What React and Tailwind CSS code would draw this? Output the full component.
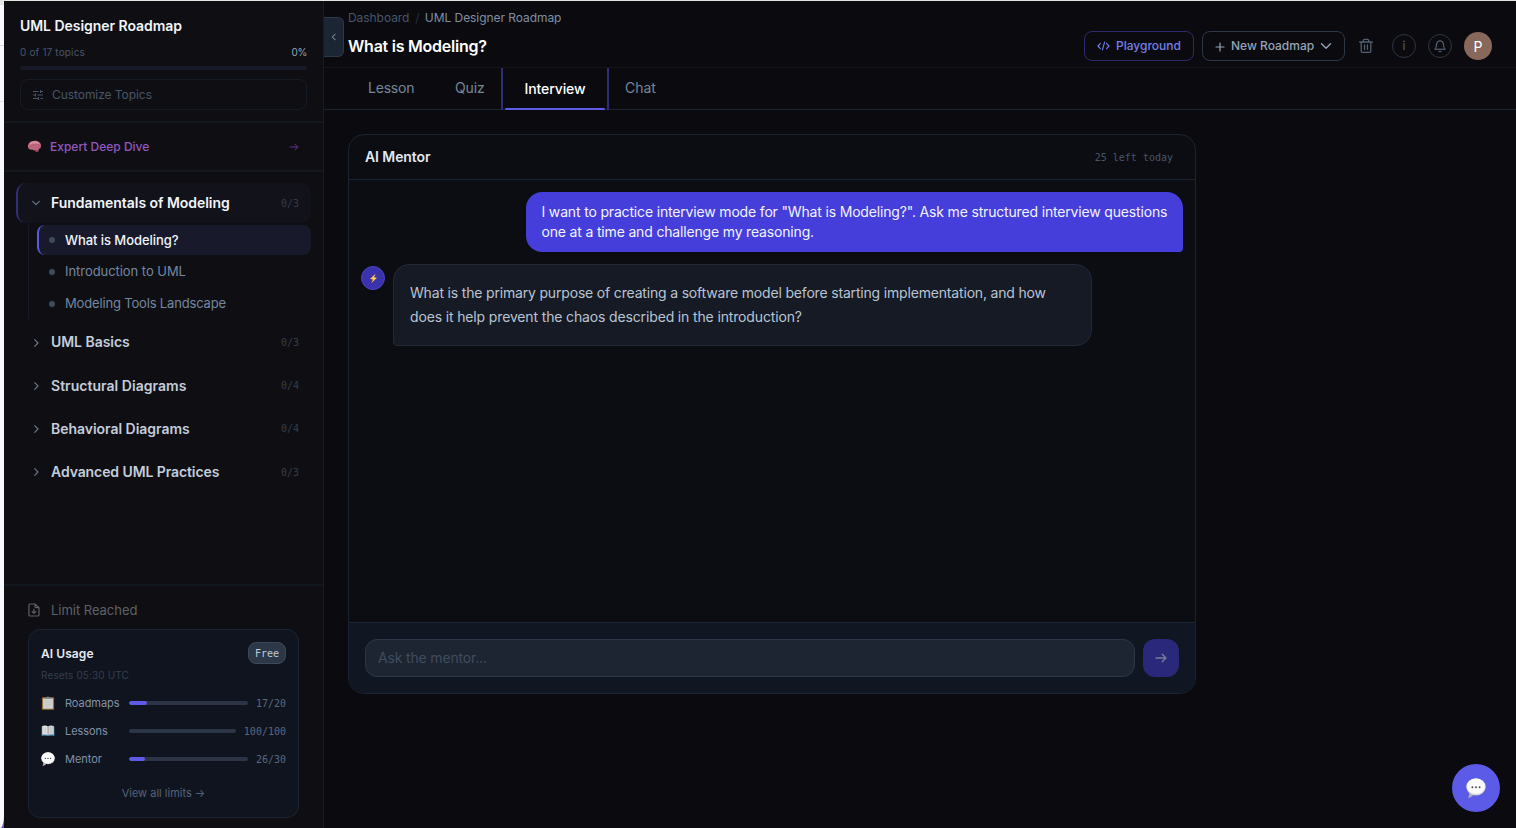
const MONO = "font-['DejaVu_Sans_Mono',monospace]";

const groups = [
  { title: "UML Basics", count: "0/3", tracking: "tracking-[-0.05px]" },
  { title: "Structural Diagrams", count: "0/4", tracking: "tracking-[0.03px]" },
  { title: "Behavioral Diagrams", count: "0/4", tracking: "tracking-[-0.03px]" },
  { title: "Advanced UML Practices", count: "0/3", tracking: "tracking-[-0.09px]" },
];

function Chevron({ className, d }) {
  return (
    <svg viewBox="0 0 12 12" className={className} fill="none" stroke="currentColor" strokeWidth="1.2" strokeLinecap="round" strokeLinejoin="round">
      <path d={d} />
    </svg>
  );
}

function Brain() {
  return (
    <svg viewBox="0 0 16 14" className="h-[13px] w-[15px]">
      <path d="M1 7.6C.6 4.6 2.6 2 5 1.3 7.400.4 11 .6 12.8 2.2c1.800.9 2.600 3 2.100 4.900-.1 1.600-1 2.300-2.100 2.500-.2 1.900-1.300 3.200-2.500 3.200-.8 0-1.300-.7-1.400-1.700-1.300.3-2.400 0-3.100-.8C3.600 10.700 1.300 9.900 1 7.600Z" fill="#c2687f" />
      <path d="M2.200 5C4 2.100 7 1.100 9.800 1.600c1.800.2 3.100 1.300 3.600 2.800-3-.8-7.500-.8-11.200.6Z" fill="#dc94a4" />
      <path d="M3 7.800c1.200-1.300 2.700-.3 3.600-1.200M6 4c1 .8.600 1.600 1.800 1.800M9.600 3.400c-.5 1 .8 1.300.2 2.300M9 8.800c1.200-.1 2-1 3.500-.5M12 4.800c-.5.8.5 1.300 1.600 1.200" stroke="#a04e69" strokeWidth=".6" fill="none" strokeLinecap="round" />
      <path d="M8.900 11.100c1.400 0 2.700-.4 3.900-1.500-.2 1.900-1.300 3.200-2.500 3.200-.8 0-1.300-.7-1.400-1.700Z" fill="#8a4058" />
    </svg>
  );
}

function Clipboard() {
  return (
    <svg viewBox="0 0 14 14" className="h-[14px] w-[14px]">
      <rect x=".9" y="1.200" width="12.200" height="12.600" rx=".9" fill="#9a6c3c" />
      <rect x="2.100" y="2.500" width="9.800" height="10.200" fill="#d2d2d2" />
      <path d="M3.500 5h7M3.500 6.800h7M3.500 8.600h7M3.500 10.400h5" stroke="#bcbcbc" strokeWidth=".6" />
      <path d="M4.300 1.200h1.500a1.250 1.100 0 0 1 2.400 0h1.500v1.700H4.300Z" fill="#7f868c" />
    </svg>
  );
}

function OpenBook() {
  return (
    <svg viewBox="0 0 14 12" className="h-[12px] w-[14px]">
      <path d="M.5 1.600h13v9.400H.5Z" fill="#2f6d8e" />
      <path d="M1.200 1.100C3.200.3 5.600.4 7 1.500V10.300C5.400 9.400 3.200 9.400 1.200 10Z" fill="#e3e3e3" />
      <path d="M12.800 1.100C10.800.3 8.400.4 7 1.500V10.300c1.600-.9 3.800-.9 5.800-.3Z" fill="#d2d2d2" />
      <path d="M7 1.500V10.700" stroke="#77797c" strokeWidth=".7" />
      <path d="M3 2.200v6M4.600 2.200v6M9.400 2.200v6M11 2.200v6" stroke="#b4b4b4" strokeWidth=".5" />
    </svg>
  );
}

function SpeechBubble({ className }) {
  return (
    <svg viewBox="0 0 20 20" className={className}>
      <path d="M3.200 14.300c.3 2-.2 3.900-1.300 5.500 2.500-.2 4.700-1.500 5.900-3.500Z" fill="#b0b0b3" />
      <ellipse cx="10" cy="8.900" rx="9.700" ry="8.600" fill="#d4d4d7" />
      <ellipse cx="10" cy="8.300" rx="9.200" ry="7.800" fill="#fbfbfb" />
      <g fill="#4b4b4f">
        <circle cx="6.400" cy="9.200" r=".95" />
        <circle cx="10" cy="9.200" r=".95" />
        <circle cx="13.600" cy="9.200" r=".95" />
      </g>
    </svg>
  );
}

function SidebarHeader() {
  return (
    <div className="h-[122px] shrink-0 border-b-2 border-[#14181f] px-4 pt-[15px]">
      <h2 className="text-[14px] leading-5 font-semibold tracking-[-0.045px] text-[#f1f5f9]">UML Designer Roadmap</h2>
      <div className="mt-2 flex items-center justify-between text-[10px] leading-4">
        <span className="tracking-[0.15px] text-[#475569]">0 of 17 topics</span>
        <span className="tracking-[-0.3px] text-[#94a3b8]">0%</span>
      </div>
      <div className="mt-[6px] h-1 rounded-full bg-[#171927]" />
      <button className="mt-[9px] flex h-[31px] w-full items-center gap-2 rounded-lg border border-[#161c26] px-[11px] text-[12px] text-[#475569]">
        <svg viewBox="0 0 24 24" className="h-3 w-3" fill="none" stroke="currentColor" strokeWidth="2">
          <path d="M2 5h11M17 5h5M17 2v6M2 12h5M11 12h11M7 9v6M2 19h11M17 19h5M13 16v6" />
        </svg>
        <span className="pt-px tracking-[-0.06px]">Customize Topics</span>
      </button>
    </div>
  );
}

function Lesson({ title, active, tracking }) {
  return (
    <div
      className={
        active
          ? "flex h-[30px] items-center rounded-lg border-l-2 border-[#5b5be6] bg-[#181a2c] pl-[10px] text-[13px] font-medium text-[#f1f5f9]"
          : "flex h-[30px] items-center border-l-2 border-transparent pl-[10px] text-[13px] text-[#7486a0]"
      }
    >
      <span className="mr-[10px] h-[6px] w-[6px] rounded-full bg-[#404b5b]" />
      <span className={active ? `pt-px ${tracking}` : tracking}>{title}</span>
    </div>
  );
}

function Count({ children }) {
  return <span className={`${MONO} ml-auto text-[10px] text-[#343d4b]`}>{children}</span>;
}

function UsageRow({ icon, label, value, percent }) {
  return (
    <div className="flex h-7 items-center">
      <span className="flex w-6 items-center">{icon}</span>
      <span className="w-16 text-[11px] tracking-[-0.05px] text-[#8291a7]">{label}</span>
      <span className="h-1 flex-1 overflow-hidden rounded-full bg-[#2b3545]">
        <span className="block h-full rounded-full bg-[#5d5be8]" style={{ width: `${percent}%` }} />
      </span>
      <span className={`${MONO} ml-2 text-[10px] text-[#5a687c]`}>{value}</span>
    </div>
  );
}

function Sidebar() {
  return (
    <aside className="flex w-80 shrink-0 flex-col border-r border-[#1a1b20] bg-[#0f0f13]">
      <SidebarHeader />
      <div className="flex h-[49px] shrink-0 items-center border-b-2 border-[#14181f] pr-6 pl-[23px]">
        <Brain />
        <span className="ml-2 text-[12px] font-medium text-[#9259c0]">Expert Deep Dive</span>
        <svg viewBox="0 0 10 10" className="ml-auto h-[10px] w-[10px]" fill="none" stroke="#68309b" strokeWidth="1" strokeLinecap="round" strokeLinejoin="round">
          <path d="M1.200 5h7.600M6 2.200 8.800 5 6 7.800" />
        </svg>
      </div>
      <nav className="flex flex-1 flex-col px-3 pt-[11px]">
        <div className="flex h-10 items-center rounded-[10px] border-l-2 border-[#312f76] bg-[#12121a] pr-3 pl-3">
          <Chevron className="h-3 w-3 text-[#64748b]" d="M2.700 4.400 6 7.700l3.300-3.300" />
          <span className="mb-[2px] ml-[9px] text-[14px] font-semibold tracking-[-0.04px] text-[#f1f5f9]">Fundamentals of Modeling</span>
          <Count>0/3</Count>
        </div>
        <div className="mt-[2px] ml-3 flex flex-col gap-[2px] border-l border-[#171a26] pl-2">
          <Lesson title="What is Modeling?" tracking="tracking-[-0.065px]" active />
          <Lesson title="Introduction to UML" tracking="tracking-[-0.05px]" />
          <Lesson title="Modeling Tools Landscape" tracking="tracking-[-0.165px]" />
        </div>
        <div className="mt-[2px] flex flex-col">
          {groups.map((g) => (
            <div key={g.title} className="flex h-[43.200px] items-center pr-3 pl-[14px]">
              <Chevron className="h-3 w-3 text-[#64748b]" d="M4.700 2.700 8 6 4.700 9.300" />
              <span className={`mb-[1.500px] ml-[9px] text-[14px] font-semibold text-[#c3cddb] ${g.tracking}`}>{g.title}</span>
              <Count>{g.count}</Count>
            </div>
          ))}
        </div>
      </nav>
      <div className="h-[244px] shrink-0 border-t-2 border-[#121820] pt-[6px]">
        <div className="flex h-[37px] items-center pl-6 text-[13px] tracking-[-0.03px] text-[#5e6065]">
          <svg viewBox="0 0 12 14" className="mr-[11px] mb-px h-[14px] w-3" fill="none" stroke="currentColor" strokeWidth="1.200" strokeLinecap="round" strokeLinejoin="round">
            <path d="M2.200 1h4.600L11 4.800v6.900A1.300 1.300 0 0 1 9.700 13H2.200A1.300 1.300 0 0 1 .9 11.700V2.300A1.300 1.300 0 0 1 2.200 1ZM7 1v2.600a1 1 0 0 0 1 1h3M5.950 6.200v4M4.200 8.600l1.750 1.700 1.750-1.700" />
          </svg>
          <span className="pt-px">Limit Reached</span>
        </div>
        <div className="mx-6 h-[189px] rounded-xl border border-[#1a2433] bg-[#10141f] px-3 pt-3">
          <div className="flex h-[22px] items-center justify-between">
            <span className="pt-px text-[12px] font-semibold tracking-[0.07px] text-[#e6ebf2]">AI Usage</span>
            <span className={`${MONO} flex h-[22px] items-center rounded-lg border border-[#3d4859] bg-[#2c3748] px-[6px] text-[10px] text-[#c1cbd9]`}>Free</span>
          </div>
          <div className="mt-[3px] mb-[6px] text-[10px] leading-4 tracking-[0.13px] text-[#343f4e]">Resets 05:30 UTC</div>
          <UsageRow icon={<Clipboard />} label="Roadmaps" value="17/20" percent={15} />
          <UsageRow icon={<OpenBook />} label="Lessons" value="100/100" percent={0} />
          <UsageRow icon={<SpeechBubble className="h-[14px] w-[14px]" />} label="Mentor" value="26/30" percent={13.500} />
          <div className="mt-3 text-center text-[11px] leading-4 text-[#55637a]">View all limits →</div>
        </div>
      </div>
    </aside>
  );
}

function Actions() {
  return (
    <div className="mr-6 flex items-center">
      <button className="flex h-[30px] w-[110px] items-center gap-[6px] rounded-lg border border-[#2d2b6e] pl-3 text-[12px] font-medium text-[#7480ea]">
        <svg viewBox="0 0 14 12" className="h-3 w-[13px]" fill="none" stroke="currentColor" strokeWidth="1.200" strokeLinecap="round" strokeLinejoin="round">
          <path d="M3.700 3.200 1 6l2.700 2.800M10.300 3.200 13 6l-2.700 2.800M8.200 1.800 5.800 10.200" />
        </svg>
        Playground
      </button>
      <button className="ml-2 flex h-[30px] w-[143px] items-center rounded-lg border border-[#2c3849] pl-3 text-[12px] font-medium text-[#94a3b8]">
        <svg viewBox="0 0 10 10" className="mt-[2px] mr-[6px] h-[10px] w-[10px]" fill="none" stroke="currentColor" strokeWidth="1.200" strokeLinecap="round">
          <path d="M5 1v8M1 5h8" />
        </svg>
        New Roadmap
        <svg viewBox="0 0 12 12" className="ml-[6px] h-3 w-3" fill="none" stroke="currentColor" strokeWidth="1.400" strokeLinecap="round" strokeLinejoin="round">
          <path d="M1.500 3.800 6 8.200l4.500-4.400" />
        </svg>
      </button>
      <svg viewBox="0 0 24 24" className="ml-[13px] h-4 w-4 text-[#526072]" fill="none" stroke="currentColor" strokeWidth="1.900" strokeLinecap="round" strokeLinejoin="round">
        <path d="M2.500 6h19M8 6V3.500A1.500 1.500 0 0 1 9.500 2h5A1.500 1.500 0 0 1 16 3.500V6M4.800 6v13.500A2 2 0 0 0 6.800 21.500h10.400a2 2 0 0 0 2-2V6M9.800 10.500v6.500M14.200 10.500v6.500" />
      </svg>
      <span className="ml-[18px] flex h-6 w-6 items-center justify-center rounded-full border border-[#2b3646] text-[12px] text-[#566478]">i</span>
      <span className="ml-3 flex h-6 w-6 items-center justify-center rounded-full border border-[#2b3646] text-[#64748b]">
        <svg viewBox="0 0 24 24" className="h-[14px] w-[14px]" fill="none" stroke="currentColor" strokeWidth="1.700" strokeLinecap="round" strokeLinejoin="round">
          <path d="M6 9a6 6 0 0 1 12 0c0 5 1.600 7 3 8.500H3C4.400 16 6 14 6 9ZM10.300 21.300h3.400" />
        </svg>
      </span>
      <span className="ml-3 flex h-7 w-7 items-center justify-center rounded-full bg-[#87685b] text-[14px] text-white">P</span>
    </div>
  );
}

function TopBar() {
  return (
    <header className="flex h-[67px] shrink-0 border-b border-[#15171c]">
      <button className="mt-4 flex h-10 w-5 shrink-0 items-center justify-center rounded-r-md border border-l-0 border-[#2b3849] bg-[#1b2533] text-[#94a3b8]">
        <Chevron className="h-[10px] w-[10px]" d="M7.500 2.500 4 6l3.500 3.500" />
      </button>
      <div className="ml-1 flex-1 pt-[9px]">
        <div className="flex text-[12px] leading-4 tracking-[-0.06px]">
          <span className="text-[#475569]">Dashboard</span>
          <span className="mx-[6px] w-[3.500px] text-[#272f3c]">/</span>
          <span className="text-[#7f8ea5]">UML Designer Roadmap</span>
        </div>
        <h1 className="mt-2 text-[16px] leading-6 font-semibold tracking-[-0.24px] text-white">What is Modeling?</h1>
      </div>
      <div className="flex pt-[24px]">
        <Actions />
      </div>
    </header>
  );
}

function Tabs() {
  return (
    <div className="flex h-[42px] shrink-0 border-b border-[#1b2433] pl-6 text-[14px] text-[#76869d]">
      <span className="flex w-[87px] items-center pb-[2px] pl-5 tracking-[-0.2px]">Lesson</span>
      <span className="flex w-[66px] items-center pb-[2px] pl-5 tracking-[-0.1px]">Quiz</span>
      <span className="-mb-px flex w-[108px] flex-col items-center border-x-2 border-[#2f2d75] px-[2px] font-medium tracking-[-0.11px] text-white">
        <span className="flex flex-1 items-center">Interview</span>
        <span className="h-[2px] w-full rounded-full bg-[#5d5be8]" />
      </span>
      <span className="flex items-center pb-[2px] pl-4">Chat</span>
    </div>
  );
}

function Mentor() {
  return (
    <section className="mt-6 ml-6 flex h-[560px] w-[848px] flex-col overflow-hidden rounded-2xl border border-[#1a2331] bg-[#0c0d12]">
      <div className="flex h-[45px] shrink-0 items-center justify-between border-b border-[#1a2433] pr-[22px] pl-4">
        <span className="mb-[2px] text-[14px] font-semibold tracking-[-0.09px] text-[#e2e8f0]">AI Mentor</span>
        <span className={`${MONO} text-[10px] text-[#475569]`}>25 left today</span>
      </div>
      <div className="flex flex-1 flex-col p-3">
        <div className="h-[60px] w-[657.500px] self-end rounded-2xl rounded-br-[4px] bg-[#453edb] px-4 pt-[10px] text-[14px] leading-5 tracking-[-0.168px] whitespace-nowrap text-[#f3f4ff]">
          I want to practice interview mode for "What is Modeling?". Ask me structured interview questions
          <br />
          one at a time and challenge my reasoning.
        </div>
        <div className="mt-3 flex gap-2">
          <span className="mt-[2px] flex h-6 w-6 items-center justify-center rounded-full border border-[#4a43c8] bg-[#3a33ac]">
            <svg viewBox="0 0 10 12" className="h-[11px] w-[9px]">
              <path d="M7.400.8 1 6.600l3.300.5L2.500 11.200 9 5.200 5.600 4.700Z" fill="#f3a63c" />
              <path d="M7 1.400 2 6.200l3.400.3L3.400 10 8 5.500 4.800 5.100Z" fill="#fbd578" />
            </svg>
          </span>
          <div className="h-[82px] w-[698.500px] rounded-2xl rounded-bl-[4px] border border-[#202938] bg-[#161a25] px-4 pt-4 text-[14px] leading-6 tracking-[-0.177px] whitespace-nowrap text-[#b9c4d3]">
            What is the primary purpose of creating a software model before starting implementation, and how
            <br />
            <span className="tracking-[-0.145px]">does it help prevent the chaos described in the introduction?</span>
          </div>
        </div>
      </div>
      <div className="flex h-[71px] shrink-0 gap-2 border-t border-[#1a2635] bg-[#101722] px-4 pt-4">
        <div className="flex h-[38px] flex-1 items-center rounded-xl border border-[#2c3749] bg-[#1d2532] px-3 pb-[2px] text-[14px] tracking-[-0.167px] text-[#3f4c5e]">Ask the mentor...</div>
        <button className="flex h-[38px] w-[36.500px] items-center justify-center rounded-xl bg-[#29287a] text-[#7a7c9c]">
          <svg viewBox="0 0 12 10" className="h-[10px] w-3" fill="none" stroke="currentColor" strokeWidth="1.300" strokeLinecap="round" strokeLinejoin="round">
            <path d="M1 5h10M7.200 1.200 11 5 7.200 8.800" />
          </svg>
        </button>
      </div>
    </section>
  );
}

export default function App() {
  return (
    <div className="flex h-[828px] w-[1516px] flex-col overflow-hidden bg-[#0b0b0f] font-['Inter',sans-serif]">
      <div className="h-px shrink-0 bg-[#dfe5df]" />
      <div className="flex min-h-0 flex-1">
        <div className="flex w-1 shrink-0 flex-col bg-[#7a4fc0]">
          <div className="flex flex-1 flex-col rounded-br-[4px_12px] bg-[#f8f9fb]">
            <div className="h-1 bg-[#e4e5e8]" />
            <div className="mt-10 h-px bg-[#d7d9de]" />
            <div className="mt-[55px] h-px bg-[#e2e4e8]" />
          </div>
        </div>
        <Sidebar />
        <main className="flex min-w-0 flex-1 flex-col">
          <TopBar />
          <Tabs />
          <Mentor />
        </main>
      </div>
      <button className="absolute top-[764px] left-[1452px] flex h-12 w-12 items-center justify-center rounded-full bg-[#5b5be8]">
        <SpeechBubble className="h-5 w-5" />
      </button>
    </div>
  );
}
